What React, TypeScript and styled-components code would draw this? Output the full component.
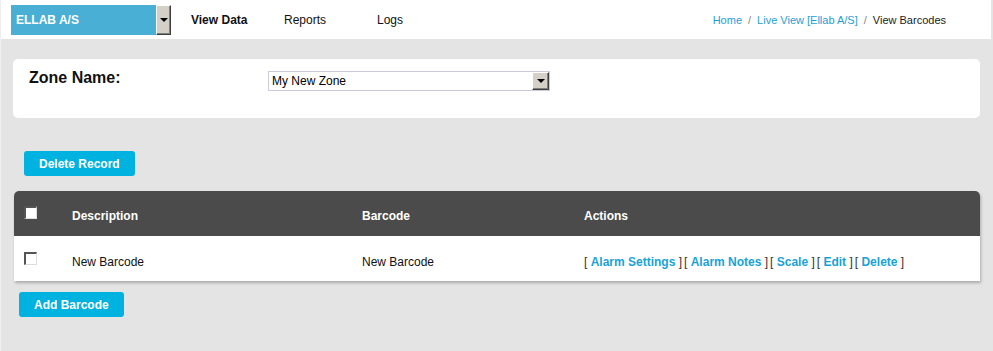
import styled, { createGlobalStyle } from "styled-components";

const GlobalStyle = createGlobalStyle`
  html, body {
    margin: 0;
    padding: 0;
    background: #e4e4e4;
    font-family: "Liberation Sans", Arial, sans-serif;
    color: #111;
  }
`;

const Page = styled.div`
  width: 991px;
  min-height: 351px;
  border-left: 1px solid #efefef;
  box-sizing: border-box;
`;

const TopBar = styled.header`
  height: 39px;
  background: #fff;
  display: flex;
  align-items: center;
  padding: 0 0 0 10px;
  box-sizing: border-box;
`;

const CompanySelect = styled.div`
  display: flex;
  width: 160px;
  height: 30px;
  margin-top: 1px;
`;

const CompanyValue = styled.div`
  flex: 1;
  background: #4aafd4;
  color: #fff;
  font-weight: bold;
  font-size: 12px;
  display: flex;
  align-items: center;
  padding-left: 5px;
`;

const DropButton = styled.div<{ w?: number }>`
  width: ${(p) => p.w ?? 15}px;
  box-sizing: border-box;
  background: #d4d0c8;
  border-top: 1px solid #fff;
  border-left: 1px solid #fff;
  border-right: 1px solid #404040;
  border-bottom: 1px solid #404040;
  box-shadow: inset -1px -1px 0 #808080;
  display: flex;
  align-items: center;
  justify-content: center;
  &::after {
    content: "";
    border-left: 4px solid transparent;
    border-right: 4px solid transparent;
    border-top: 4px solid #000;
  }
`;

const Nav = styled.nav`
  display: flex;
  margin-left: 20px;
`;

const NavItem = styled.a<{ active?: boolean }>`
  width: 93px;
  font-size: 12px;
  font-weight: ${(p) => (p.active ? "bold" : "normal")};
  color: #111;
  text-decoration: none;
`;

const Crumbs = styled.div`
  margin-left: auto;
  margin-right: 45px;
  font-size: 11px;
  color: #222;
  display: flex;
  gap: 6px;
`;

const CrumbLink = styled.a`
  color: #1da0d9;
  text-decoration: none;
`;

const CrumbSep = styled.span`
  color: #888;
`;

const Content = styled.main`
  padding: 20px 11px 0 12px;
`;

const ZonePanel = styled.section`
  background: #fff;
  border-radius: 5px;
  height: 59px;
  display: flex;
  align-items: flex-start;
  padding: 11px 0 0 16px;
  box-sizing: border-box;
`;

const ZoneLabel = styled.div`
  width: 239px;
  font-size: 16px;
  font-weight: bold;
  line-height: 16px;
`;

const ZoneSelect = styled.div`
  display: flex;
  width: 282px;
  height: 20px;
  margin-top: 1px;
  border: 1px solid #c9cbdb;
  box-sizing: border-box;
  background: #fff;
`;

const ZoneValue = styled.div`
  flex: 1;
  font-size: 12px;
  padding-left: 3px;
  line-height: 18px;
  color: #000;
`;

const Button = styled.button<{ ml: number }>`
  display: block;
  margin-left: ${(p) => p.ml}px;
  background: #00b2df;
  color: #fff;
  border: none;
  border-radius: 3px;
  font-family: "Liberation Sans", Arial, sans-serif;
  font-weight: bold;
  font-size: 12px;
  height: 25px;
  padding: 0 15px;
`;

const Table = styled.div`
  margin: 15px 0 0 1px;
  border-radius: 5px 5px 0 0;
  box-shadow: 1px 2px 3px rgba(0, 0, 0, 0.25);
  background: #fff;
`;

const Row = styled.div<{ head?: boolean }>`
  display: grid;
  grid-template-columns: 48px 290px 222px 1fr;
  align-items: center;
  height: 45px;
  box-sizing: border-box;
  padding: ${(p) => (p.head ? "4px" : "6px")} 0 0 10px;
  font-size: 12px;
  background: ${(p) => (p.head ? "#4b4b4b" : "#fff")};
  color: ${(p) => (p.head ? "#fff" : "#111")};
  font-weight: ${(p) => (p.head ? "bold" : "normal")};
  border-radius: ${(p) => (p.head ? "5px 5px 0 0" : "0")};
`;

const Check = styled.span`
  display: block;
  width: 13px;
  height: 13px;
  box-sizing: border-box;
  border-top: 2px solid #555;
  border-left: 2px solid #555;
  border-right: 1px solid #ddd;
  border-bottom: 1px solid #ddd;
  background: #fff;
  margin-top: -6px;
`;

const Actions = styled.div`
  color: #333;
  font-weight: normal;
`;

const ActionItem = styled.span`
  & + & {
    margin-left: 2px;
  }
`;

const ActionLink = styled.a`
  color: #17a3d8;
  font-weight: bold;
  text-decoration: none;
`;

const Footer = styled.div`
  margin-top: 11px;
`;

const actions = ["Alarm Settings", "Alarm Notes", "Scale", "Edit", "Delete"];

export default function App() {
  return (
    <>
      <GlobalStyle />
      <Page>
        <TopBar>
          <CompanySelect>
            <CompanyValue>ELLAB A/S</CompanyValue>
            <DropButton />
          </CompanySelect>
          <Nav>
            <NavItem active>View Data</NavItem>
            <NavItem>Reports</NavItem>
            <NavItem>Logs</NavItem>
          </Nav>
          <Crumbs>
            <CrumbLink>Home</CrumbLink>
            <CrumbSep>/</CrumbSep>
            <CrumbLink>Live View [Ellab A/S]</CrumbLink>
            <CrumbSep>/</CrumbSep>
            <span>View Barcodes</span>
          </Crumbs>
        </TopBar>
        <Content>
          <ZonePanel>
            <ZoneLabel>Zone Name:</ZoneLabel>
            <ZoneSelect>
              <ZoneValue>My New Zone</ZoneValue>
              <DropButton w={17} />
            </ZoneSelect>
          </ZonePanel>
          <div style={{ height: 33 }} />
          <Button ml={11}>Delete Record</Button>
          <Table>
            <Row head>
              <Check />
              <div>Description</div>
              <div>Barcode</div>
              <div>Actions</div>
            </Row>
            <Row>
              <Check />
              <div>New Barcode</div>
              <div>New Barcode</div>
              <Actions>
                {actions.map((a) => (
                  <ActionItem key={a}>
                    [ <ActionLink>{a}</ActionLink> ]
                  </ActionItem>
                ))}
              </Actions>
            </Row>
          </Table>
          <Footer>
            <Button ml={6}>Add Barcode</Button>
          </Footer>
        </Content>
      </Page>
    </>
  );
}
